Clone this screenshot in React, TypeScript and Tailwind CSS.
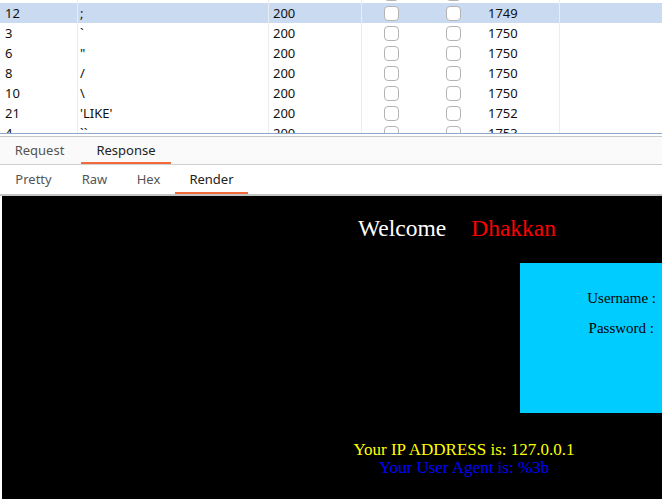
import React from 'react'

type Row = {
  id: string
  payload: string
  status: string
  length: string
  selected?: boolean
}

const rows: Row[] = [
  { id: '', payload: '', status: '', length: '' },
  { id: '12', payload: ';', status: '200', length: '1749', selected: true },
  { id: '3', payload: '`', status: '200', length: '1750' },
  { id: '6', payload: '"', status: '200', length: '1750' },
  { id: '8', payload: '/', status: '200', length: '1750' },
  { id: '10', payload: '\\', status: '200', length: '1750' },
  { id: '21', payload: "'LIKE'", status: '200', length: '1752' },
  { id: '4', payload: '``', status: '200', length: '1753' },
]

function Checkbox() {
  return <span className="block h-[15px] w-[15px] rounded-[4px] border border-[#b4b4b4] bg-white" />
}

function ResultRow({ row }: { row: Row }) {
  return (
    <div className={`flex h-[20px] items-center text-[13px] text-[#111] ${row.selected ? 'bg-[#c9daf1]' : 'bg-white'}`}>
      <div className="h-full w-[78px] border-r border-[#ececec] pl-[5px] leading-[20px]">{row.id}</div>
      <div className="h-full w-[191px] border-r border-[#ececec] pl-[2px] leading-[20px]">{row.payload}</div>
      <div className="h-full w-[93px] border-r border-[#ececec] pl-[4px] leading-[20px]">{row.status}</div>
      <div className="flex h-full w-[61px] items-center justify-center pr-[2px]">
        <Checkbox />
      </div>
      <div className="flex h-full w-[61px] items-center justify-center">
        <Checkbox />
      </div>
      <div className="h-full w-[76px] border-r border-[#ececec] pl-[4px] leading-[20px]">{row.length}</div>
      <div className="h-full flex-1" />
    </div>
  )
}

function Tab({ label, active, width }: { label: string; active?: boolean; width: string }) {
  return (
    <div className={`flex h-full flex-col ${width}`}>
      <div className={`flex flex-1 items-center justify-center pt-[3px] ${active ? 'text-[#222]' : 'text-[#555]'}`}>{label}</div>
      <div className={`h-[2px] ${active ? 'bg-[#f26a3c]' : 'bg-transparent'}`} />
    </div>
  )
}

export default function App() {
  return (
    <div className="flex h-[499px] w-[662px] flex-col overflow-hidden bg-white font-['Noto_Sans',sans-serif]">
      <div className="h-[133px] shrink-0 overflow-hidden">
        <div className="-mt-[17px]">
          {rows.map((row, i) => (
            <ResultRow key={i} row={row} />
          ))}
        </div>
      </div>
      <div className="h-px shrink-0 bg-[#8ea9cc]" />
      <div className="h-[2px] shrink-0 bg-white" />
      <div className="h-px shrink-0 bg-[#c8c8c8]" />

      <div className="flex h-[27px] shrink-0 items-stretch bg-[#fafafa] text-[13px]">
        <Tab label="Request" width="w-[79px]" />
        <Tab label="Response" width="w-[90px] ml-[2px]" active />
      </div>
      <div className="h-px shrink-0 bg-[#cfcfcf]" />

      <div className="flex h-[29px] shrink-0 items-stretch bg-white text-[13px]">
        <Tab label="Pretty" width="w-[67px]" />
        <Tab label="Raw" width="w-[55px]" />
        <Tab label="Hex" width="w-[53px]" />
        <Tab label="Render" width="w-[73px]" active />
      </div>
      <div className="h-[2px] shrink-0 bg-[#c4c4c4]" />

      <div className="ml-[2px] flex-1 overflow-hidden bg-black font-['Liberation_Serif',serif]">
        <div className="w-[924px]">
          <div className="pl-[356px] pt-[19px] text-[23.5px] leading-[27px] text-white">
            <span className="mr-[25px]">Welcome</span>
            <span className="text-[#ff0000]">Dhakkan</span>
          </div>

          <div className="ml-[518px] mt-[21px] h-[150px] w-[400px] bg-[#00ccff] pt-[25px] text-[15px] leading-[20px] text-black">
            <div className="flex w-[136px] flex-col items-end gap-[10px]">
              <div>Username :</div>
              <div className="pr-[2px]">Password :</div>
            </div>
          </div>

          <div className="mt-[28px] text-center text-[17px] leading-[18px]">
            <div className="text-[#ffff00]">Your IP ADDRESS is: 127.0.0.1</div>
            <div className="text-[#0000ff]">Your User Agent is: %3b</div>
          </div>
        </div>
      </div>
    </div>
  )
}
